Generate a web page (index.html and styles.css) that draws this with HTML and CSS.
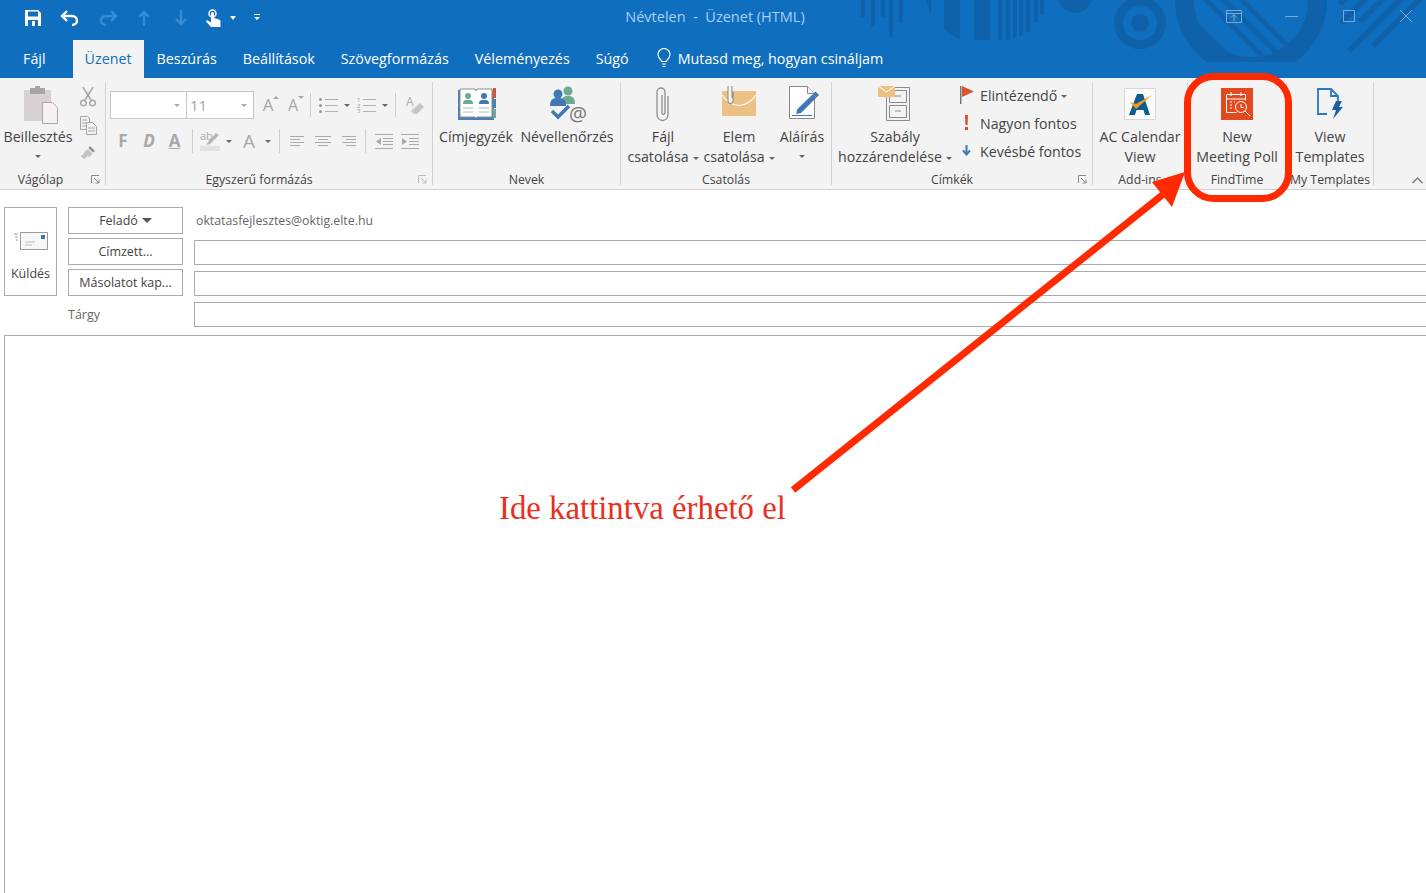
FILE: index.html
```html
<!DOCTYPE html>
<html lang="hu">
<head>
    <meta charset="UTF-8">
    <title>Névtelen - Üzenet (HTML)</title>
    <link rel="stylesheet" href="styles.css">
</head>
<body>
<div class="app">
    <div class="top">
        <!-- background art of the title bar -->
        <svg class="art" width="1426" height="78" viewBox="0 0 1426 78">
            <defs>
                <clipPath id="artClip"><rect x="0" y="0" width="1426" height="62"/></clipPath>
                <clipPath id="ringClip"><circle cx="1251" cy="0" r="57"/></clipPath>
            </defs>
            <g fill="#0f62a9" clip-path="url(#artClip)">
                <rect x="861" y="0" width="4" height="17"/>
                <rect x="871" y="0" width="4" height="26"/>
                <rect x="881" y="0" width="4" height="17"/>
                <rect x="889" y="0" width="4" height="37"/>
                <rect x="899" y="0" width="4" height="23"/>
                <polygon points="925,0 931,0 931,14"/>
                <polygon points="944,0 960,0 960,40 944,30"/>
                <rect x="974" y="0" width="16" height="40"/>
                <rect x="998" y="0" width="4" height="40"/>
                <rect x="1006" y="0" width="4" height="40"/>
                <rect x="1013" y="0" width="4" height="38"/>
                <rect x="1019" y="0" width="4" height="36"/>
                <rect x="1026" y="0" width="4" height="32"/>
                <rect x="1034" y="0" width="4" height="22"/>
                <rect x="1040" y="0" width="4" height="14"/>
                <circle cx="1075" cy="-4" r="17"/>
                <circle cx="1140" cy="23" r="9"/>
                <circle cx="1140" cy="23" r="21.5" fill="none" stroke="#0f62a9" stroke-width="9"/>
                <circle cx="1251" cy="0" r="66.5" fill="none" stroke="#0f62a9" stroke-width="19"/>
                <g clip-path="url(#ringClip)" stroke="#0f62a9" stroke-width="5">
                    <line x1="1190" y1="18" x2="1232" y2="60"/>
                    <line x1="1200" y1="-6" x2="1266" y2="60"/>
                    <line x1="1218" y1="-6" x2="1284" y2="60"/>
                    <line x1="1236" y1="-6" x2="1290" y2="48"/>
                </g>
                <g stroke="#0f62a9" stroke-width="6">
                    <line x1="1349" y1="51" x2="1426" y2="-26"/>
                    <line x1="1373" y1="46" x2="1440" y2="-21"/>
                    <line x1="1341" y1="23" x2="1375" y2="-11"/>
                    <line x1="1360" y1="22" x2="1395" y2="-13"/>
                    <line x1="1340" y1="4" x2="1350" y2="-6"/>
                </g>
            </g>
        </svg>

        <div class="titlebar">
            <div class="qat">
                <svg class="qat-save" width="16" height="16" viewBox="0 0 16 16"><path d="M0 0h13l3 3v13H0z" fill="#fff"/><rect x="3" y="1.500" width="10" height="5" fill="#106ebe"/><rect x="3" y="10" width="10" height="6" fill="#106ebe"/><rect x="7" y="11" width="3" height="5" fill="#fff"/></svg>
                <svg class="qat-undo" width="20" height="18" viewBox="0 0 20 18"><path d="M7 2 2 7l5 5M3 7h9c3 0 5 2 5 4.500S15 16 12 16" fill="none" stroke="#fff" stroke-width="2.400"/></svg>
                <svg class="qat-redo" width="20" height="18" viewBox="0 0 20 18"><path d="M13 2l5 5-5 5M17 7H8C5 7 3 9 3 11.500S5 16 8 16" fill="none" stroke="#3a8bd2" stroke-width="2.400"/></svg>
                <svg class="qat-up" width="14" height="16" viewBox="0 0 14 16"><path d="M2 7l5-5 5 5M7 2v14" fill="none" stroke="#3a8bd2" stroke-width="2.400"/></svg>
                <svg class="qat-down" width="14" height="16" viewBox="0 0 14 16"><path d="M2 9l5 5 5-5M7 14V0" fill="none" stroke="#3a8bd2" stroke-width="2.400"/></svg>
                <svg class="qat-touch" width="15" height="18" viewBox="0 0 15 18"><circle cx="6.500" cy="4.500" r="3.500" fill="none" stroke="#fff" stroke-width="1.500"/><path d="M5 4.500c0-2 3-2 3 0V9l5 1.500c1 .5 1.500 1 1.500 2V18H5L0 12.500l1-1.500 4 2.500z" fill="#fff"/></svg>
                <span class="qat-caret"></span>
                <span class="qat-more"></span>
            </div>
            <div class="doc-title">Névtelen&nbsp; - &nbsp;Üzenet (HTML)</div>
            <div class="win-buttons">
                <svg width="16" height="13" viewBox="0 0 16 13"><path d="M.5.5h15v12H.5zM.5 3.500h15M8 11V5M5 7.500 8 4.500l3 3" fill="none" stroke="#7ea8cf"/></svg>
                <svg width="13" height="13" viewBox="0 0 13 13"><path d="M0 6.500h13" stroke="#7ea8cf"/></svg>
                <svg width="12" height="12" viewBox="0 0 12 12"><path d="M.5.5h11v11H.5z" fill="none" stroke="#7ea8cf"/></svg>
                <svg width="12" height="12" viewBox="0 0 12 12"><path d="M0 0l12 12M12 0 0 12" stroke="#7ea8cf"/></svg>
            </div>
        </div>

        <div class="tabs">
            <span class="tab tab-file">Fájl</span>
            <span class="tab active">Üzenet</span>
            <span class="tab">Beszúrás</span>
            <span class="tab">Beállítások</span>
            <span class="tab">Szövegformázás</span>
            <span class="tab">Véleményezés</span>
            <span class="tab">Súgó</span>
            <span class="tell-me">
                <svg width="14" height="20" viewBox="0 0 14 20"><path d="M4.500 13.500C4 11 1 10 1 6.500a6 6 0 0 1 12 0c0 3.500-3 4.500-3.500 7zM5 16h4M5.500 18.500h3" fill="none" stroke="#fff" stroke-width="1.200"/></svg>
                Mutasd meg, hogyan csináljam
            </span>
        </div>
    </div>

    <div class="ribbon">
        <!-- Vágólap -->
        <div class="group g-clip">
            <div class="group-body">
                <div class="big b-paste">
                    <svg class="icon" width="40" height="40" viewBox="0 0 40 40"><rect x="6" y="4" width="27" height="31" rx="1" fill="#d6d2d4"/><rect x="12" y="2" width="15" height="6" fill="#a8a3a5"/><rect x="17" y="0" width="5" height="4" fill="#a8a3a5"/><path d="M24.500 16.500h10l5 5v16h-15z" fill="#f5f1f5" stroke="#aaa5a9"/></svg>
                    <span>Beillesztés</span>
                    <span class="caret"></span>
                </div>
                <div class="small-icons">
                    <svg width="16" height="20" viewBox="0 0 16 20"><path d="M3 0l8 13M13 0 5 13" stroke="#a6a6a6" stroke-width="1.500" fill="none"/><circle cx="3.500" cy="16" r="2.800" fill="none" stroke="#a6a6a6" stroke-width="1.500"/><circle cx="12.500" cy="16" r="2.800" fill="none" stroke="#a6a6a6" stroke-width="1.500"/></svg>
                    <svg width="17" height="19" viewBox="0 0 17 19"><path d="M.5.500h7l2 2v11H.5zM2 4h5M2 7h5M2 10h5" fill="#f3f3f3" stroke="#a6a6a6"/><path d="M6.500 6.500h6l4 4v8h-10zM8 12h7M8 15h7" fill="#f3f3f3" stroke="#a6a6a6"/></svg>
                    <svg width="17" height="17" viewBox="0 0 17 17"><path d="M10 2l5 5-2 1.500L8.500 4z" fill="#8f8f8f"/><path d="M8 5l4.500 4.500-3 3.500-2-1-3 3-1-.5-3-2.500 3-1.500 1-3z" fill="#c4c4c4"/></svg>
                </div>
            </div>
            <div class="group-label has-launcher-wide">Vágólap</div>
            <svg class="launcher" width="9" height="9" viewBox="0 0 9 9"><path d="M.5 8V.5H8M3 3l5 5M8 4.500V8H4.500" fill="none" stroke="#888"/></svg>
        </div>

        <!-- Egyszerű formázás -->
        <div class="group g-format">
            <div class="group-body format-body">
                <div class="tool-row">
                    <span class="select s-font"><span class="caret"></span></span>
                    <span class="select s-size">11<span class="caret"></span></span>
                    <span class="tool t-a-big">A<i class="tiny-up"></i></span>
                    <span class="tool t-a-small">A<i class="tiny-down"></i></span>
                    <span class="tool-sep sep-a"></span>
                    <svg class="t-bullets" width="19" height="15" viewBox="0 0 19 15"><path d="M6 1.500h13M6 7.500h13M6 13.500h13" stroke="#b0b0b0"/><circle cx="1.500" cy="1.500" r="1.500" fill="#999"/><circle cx="1.500" cy="7.500" r="1.500" fill="#999"/><circle cx="1.500" cy="13.500" r="1.500" fill="#999"/></svg>
                    <span class="caret c-list"></span>
                    <svg class="t-numbers" width="19" height="22" viewBox="0 -3 19 22"><path d="M6 2.500h13M6 8.500h13M6 14.500h13" stroke="#b0b0b0"/><text class="tiny-num" x="0" y="5">1</text><text class="tiny-num" x="0" y="10.500">2</text><text class="tiny-num" x="0" y="16">3</text></svg>
                    <span class="caret c-list"></span>
                    <span class="tool-sep sep-b"></span>
                    <svg class="t-eraser" width="18" height="23" viewBox="0 -4 18 23"><path d="M8 18l-3-3L14 7l4 4-7 7z" fill="#c6c6c6"/><text class="svg-a" x="0" y="10">A</text></svg>
                </div>
                <div class="tool-row row-two">
                    <b class="tool t-f">F</b>
                    <b class="tool t-d">D</b>
                    <b class="tool t-u">A</b>
                    <span class="tool-sep sep-c"></span>
                    <svg class="t-high" width="20" height="25" viewBox="0 -3 20 25"><rect x="0" y="16" width="20" height="5" fill="#e2e2e2"/><path d="M6 15l2-3 8-9 3 2-9 9z" fill="#b5b5b5"/><text class="svg-ab" x="0" y="10">ab</text></svg>
                    <span class="caret c-high"></span>
                    <span class="tool t-color">A</span>
                    <span class="caret c-color"></span>
                    <span class="tool-sep sep-d"></span>
                    <svg class="t-align" width="14" height="11" viewBox="0 0 14 11"><path d="M0 .5h14M0 3.500h10M0 6.500h14M0 9.500h10" stroke="#aaa"/></svg>
                    <svg class="t-align-c" width="16" height="11" viewBox="0 0 16 11"><path d="M0 .5h16M3 3.500h10M0 6.500h16M3 9.500h10" stroke="#aaa"/></svg>
                    <svg class="t-align-r" width="14" height="11" viewBox="0 0 14 11"><path d="M0 .5h14M4 3.500h10M0 6.500h14M4 9.500h10" stroke="#aaa"/></svg>
                    <span class="tool-sep sep-e"></span>
                    <svg class="t-out" width="18" height="15" viewBox="0 0 18 15"><path d="M0 .5h18M8 4.500h10M8 7.500h10M8 10.500h10M0 14.500h18" stroke="#aaa"/><path d="M6 4v7L1 7.500z" fill="#aaa"/></svg>
                    <svg class="t-in" width="18" height="15" viewBox="0 0 18 15"><path d="M0 .5h18M8 4.500h10M8 7.500h10M8 10.500h10M0 14.500h18" stroke="#aaa"/><path d="M1 4v7l5-3.500z" fill="#aaa"/></svg>
                </div>
            </div>
            <div class="group-label has-launcher">Egyszerű formázás</div>
            <svg class="launcher" width="9" height="9" viewBox="0 0 9 9"><path d="M.5 8V.5H8M3 3l5 5M8 4.500V8H4.500" fill="none" stroke="#bbb"/></svg>
        </div>

        <!-- Nevek -->
        <div class="group g-names">
            <div class="group-body">
                <div class="big b-book">
                    <svg class="icon" width="40" height="40" viewBox="0 0 40 40"><rect x="2" y="4" width="36" height="30" fill="#4a7fb8"/><rect x="37" y="2" width="3" height="10" fill="#d9552b"/><rect x="37" y="13" width="3" height="9" fill="#4a7fb8"/><rect x="37" y="23" width="3" height="9" fill="#6cab93"/><path d="M4 3h15l1 2 1-2h15v28H21l-1 1-1-1H4z" fill="#fff" stroke="#8d8d8d"/><circle cx="12" cy="10" r="3" fill="#6cab93"/><path d="M7 18c0-4 2-4 5-4s5 0 5 4z" fill="#6cab93"/><circle cx="28" cy="10" r="3" fill="#3f78b5"/><path d="M23 18c0-4 2-4 5-4s5 0 5 4z" fill="#3f78b5"/><path d="M7 22h10M7 26h10M23 22h10M23 26h10" stroke="#b5b5b5"/></svg>
                    <span>Címjegyzék</span>
                </div>
                <div class="big b-check">
                    <svg class="icon" width="40" height="40" viewBox="0 0 40 40"><circle cx="21" cy="5" r="4.500" fill="#6cab93"/><path d="M14 18c0-7 3-8 7-8s7 1 7 8z" fill="#6cab93"/><circle cx="11" cy="8" r="4.500" fill="#3f78b5"/><path d="M3 20c0-7 3-8 8-8s8 1 8 8z" fill="#3f78b5"/><path d="M5 25l6 6 11-11" fill="none" stroke="#3f78b5" stroke-width="3.500"/><text x="22" y="35" class="at-sign">@</text></svg>
                    <span>Névellenőrzés</span>
                </div>
            </div>
            <div class="group-label">Nevek</div>
        </div>

        <!-- Csatolás -->
        <div class="group g-attach">
            <div class="group-body">
                <div class="big b-file">
                    <svg class="icon" width="40" height="40" viewBox="0 0 40 40"><path d="M25 10v19a5.500 5.500 0 0 1-11 0V6a4 4 0 0 1 8 0v21a1.500 1.500 0 0 1-3 0V9" fill="none" stroke="#8f8f8f" stroke-width="1.300"/></svg>
                    <span>Fájl</span>
                    <span>csatolása<i class="caret inline"></i></span>
                </div>
                <div class="big b-item">
                    <svg class="icon" width="40" height="40" viewBox="0 0 40 40"><rect x="3" y="5" width="34" height="25" fill="#ebc283"/><path d="M3 9c10 14 24 14 34 0" fill="none" stroke="#fff" stroke-width="1.200"/><path d="M14 6v9a2.500 2.500 0 0 1-5 0V1a2 2 0 0 1 4 0v11" fill="#f3f3f3" stroke="#8f8f8f" stroke-width="1.100"/></svg>
                    <span>Elem</span>
                    <span>csatolása<i class="caret inline"></i></span>
                </div>
                <div class="big b-sign">
                    <svg class="icon" width="40" height="40" viewBox="0 0 40 40"><path d="M7.500.5h18l7 7v25h-25z" fill="#fff" stroke="#8a8a8a"/><path d="M25.500.5v7h7" fill="#f3f3f3" stroke="#8a8a8a"/><path d="M14 28l1.500-5L31 8l3.500 3.500L19 27z" fill="#3f78b5"/><path d="M31 8l2.500-2.500 3.500 3.500-2.500 2.500z" fill="#3f78b5"/><path d="M10 29.500h20" stroke="#3f78b5"/></svg>
                    <span>Aláírás</span>
                    <span class="caret"></span>
                </div>
            </div>
            <div class="group-label">Csatolás</div>
        </div>

        <!-- Címkék -->
        <div class="group g-tags">
            <div class="group-body">
                <div class="big b-rule">
                    <svg class="icon" width="40" height="40" viewBox="0 0 40 40"><path d="M11.500 1.500h23v33h-23zM14.500 4.500h17v12h-17zM14.500 19.500h17v12h-17zM20 10h6M20 25h6" fill="#f3f3f3" stroke="#8a8a8a"/><rect x="3" y="-2" width="17" height="13" fill="#ebc283"/><path d="M3 0l8.500 6L20 0" fill="none" stroke="#fff"/></svg>
                    <span>Szabály</span>
                    <span>hozzárendelése<i class="caret inline"></i></span>
                </div>
                <ul class="tag-list">
                    <li>
                        <svg width="14" height="18" viewBox="0 0 14 18"><path d="M.75 0v18" stroke="#777" stroke-width="1.500"/><path d="M2 0l12 5.500L2 11z" fill="#d9552b"/></svg>
                        <span>Elintézendő<i class="caret inline"></i></span>
                    </li>
                    <li>
                        <svg width="14" height="18" viewBox="0 0 14 18"><path d="M5 1h3L7.500 11h-2z" fill="#e0492a"/><rect x="5" y="13" width="3" height="3" fill="#e0492a"/></svg>
                        <span>Nagyon fontos</span>
                    </li>
                    <li>
                        <svg width="14" height="18" viewBox="0 0 14 18"><path d="M3 8.500l3.500 4 3.500-4M6.500 12V3" fill="none" stroke="#3f78b5" stroke-width="2"/></svg>
                        <span>Kevésbé fontos</span>
                    </li>
                </ul>
            </div>
            <div class="group-label has-launcher">Címkék</div>
            <svg class="launcher" width="9" height="9" viewBox="0 0 9 9"><path d="M.5 8V.5H8M3 3l5 5M8 4.500V8H4.500" fill="none" stroke="#888"/></svg>
        </div>

        <!-- Add-ins -->
        <div class="group g-addin">
            <div class="group-body">
                <div class="big">
                    <svg class="icon icon-low" width="32" height="32" viewBox="0 0 32 32"><rect x=".5" y=".5" width="31" height="31" fill="#fbfbfb" stroke="#d8d8d8"/><path d="M5 27 13 6h6l7 21h-5l-1.500-5h-7L11 27z" fill="#0f5c8f"/><path d="M6 14l6 7L28 7 12 16z" fill="#f29a1f"/></svg>
                    <span>AC Calendar</span>
                    <span>View</span>
                </div>
            </div>
            <div class="group-label">Add-ins</div>
        </div>

        <div class="group g-findtime">
            <div class="group-body">
                <div class="big">
                    <svg class="icon icon-low" width="32" height="32" viewBox="0 0 32 32"><rect width="32" height="32" fill="#e2491e"/><path d="M5.500 6.500h19v6M5.500 6.500v18h10M5.500 11h19M10 4v4M20 4v4" fill="none" stroke="#fff"/><path d="M9 14h2M9 17h2M9 20h2M13 14h1" stroke="#fff"/><circle cx="20" cy="19" r="5.500" fill="#e2491e" stroke="#fff"/><path d="M20 16v3.500h2.500M24 23l5 5" fill="none" stroke="#fff"/></svg>
                    <span>New</span>
                    <span>Meeting Poll</span>
                </div>
            </div>
            <div class="group-label">FindTime</div>
        </div>

        <div class="group g-templates">
            <div class="group-body">
                <div class="big">
                    <svg class="icon icon-low" width="32" height="32" viewBox="0 0 32 32"><path d="M13 26H4V1h13l7 7v7" fill="none" stroke="#2b79c2" stroke-width="1.800"/><path d="M17 1v7h7" fill="none" stroke="#2b79c2" stroke-width="1.800"/><path d="M22 13h6l-3 6h4l-10 12 3-9h-4z" fill="#1c5f9e"/></svg>
                    <span>View</span>
                    <span>Templates</span>
                </div>
            </div>
            <div class="group-label">My Templates</div>
        </div>

        <svg class="collapse" width="11" height="7" viewBox="0 0 11 7"><path d="M.5 6l5-5 5 5" fill="none" stroke="#777" stroke-width="1.400"/></svg>
    </div>

    <div class="compose">
        <div class="head">
            <button class="send">
                <svg width="34" height="18" viewBox="0 0 34 18"><path d="M6.500 .5h27v17h-27z" fill="#f7f7f7" stroke="#9a9a9a"/><rect x="27" y="3" width="4" height="4" fill="#3f78b5"/><path d="M11 10h10M11 13h7" stroke="#bbb"/><path d="M0 2h4M1 5h3M2 8h2" stroke="#999"/></svg>
                <span>Küldés</span>
            </button>
            <div class="fields">
                <button class="field-btn">Feladó<i class="from-caret"></i></button>
                <div class="from-addr">oktatasfejlesztes@oktig.elte.hu</div>
                <button class="field-btn">Címzett...</button>
                <input class="field-input" type="text">
                <button class="field-btn">Másolatot kap...</button>
                <input class="field-input" type="text">
                <div class="subject-label">Tárgy</div>
                <input class="field-input" type="text">
            </div>
        </div>
        <div class="editor"></div>
    </div>

    <!-- annotation drawn over the screenshot -->
    <svg class="annotation" width="1426" height="893" viewBox="0 0 1426 893">
        <rect x="1187.500" y="76.500" width="101" height="122" rx="26" fill="none" stroke="#ff2a00" stroke-width="7"/>
        <line x1="793" y1="490" x2="1166" y2="192" stroke="#ff2a00" stroke-width="7"/>
        <polygon points="1185,172 1152,182 1172,207" fill="#ff2a00"/>
    </svg>
    <div class="note">Ide kattintva érhető el</div>
</div>
</body>
</html>
```

FILE: styles.css
```css
* {
    margin: 0;
    padding: 0;
    box-sizing: border-box;
}

html, body {
    height: 100%;
    overflow: hidden;
}

body {
    background: #fff;
    font-family: 'Open Sans', 'Noto Sans', sans-serif;
    font-size: 14.2px;
    color: #444;
}

svg {
    display: block;
    flex: none;
}

i {
    font-style: normal;
}

.app {
    position: relative;
    height: 100%;
    display: flex;
    flex-direction: column;
    overflow: hidden;
}

/* title bar and tabs */
.top {
    position: relative;
    height: 78px;
    flex: none;
    background: #106ebe;
}

.art {
    position: absolute;
    left: 0;
    top: 0;
}

.titlebar {
    position: relative;
    height: 40px;
    display: flex;
    align-items: center;
}

.qat {
    display: flex;
    align-items: center;
    padding-left: 25px;
    height: 35px;
    margin-bottom: 5px;
}

.qat-undo { margin-left: 19px; }
.qat-redo { margin-left: 18px; }
.qat-up { margin-left: 19px; }
.qat-down { margin-left: 23px; }
.qat-touch { margin-left: 18px; }

.qat-caret {
    width: 0;
    height: 0;
    margin-left: 9px;
    border-left: 3.5px solid transparent;
    border-right: 3.5px solid transparent;
    border-top: 4px solid #fff;
}

.qat-more {
    width: 6px;
    height: 7px;
    margin-left: 18px;
    border-top: 1px solid #fff;
    position: relative;
}

.qat-more::after {
    content: "";
    position: absolute;
    left: 0;
    top: 2px;
    border-left: 3px solid transparent;
    border-right: 3px solid transparent;
    border-top: 3px solid #fff;
}

.doc-title {
    position: absolute;
    left: 0;
    right: 0;
    top: 7px;
    text-align: center;
    color: #a9d0f2;
    font-size: 14.5px;
    line-height: 20px;
    padding-left: 4px;
}

.win-buttons {
    margin-left: auto;
    display: flex;
    align-items: center;
    padding-right: 14px;
    padding-bottom: 8px;
}

.win-buttons svg { margin-left: 45px; }
.win-buttons svg:nth-child(2) { margin-left: 43px; }

.tabs {
    position: relative;
    height: 38px;
    display: flex;
    color: #fff;
    font-size: 14.3px;
    line-height: 37px;
}

.tab {
    padding: 0 13px;
    white-space: nowrap;
}

.tab-file {
    margin-left: 10px;
    padding-right: 27px;
}

.tab.active {
    background: #f3f3f3;
    color: #106ebe;
    padding: 0 12px;
}

.tell-me {
    display: flex;
    align-items: center;
    gap: 7px;
    margin-left: 15px;
    padding-bottom: 2px;
    white-space: nowrap;
}

/* ribbon */
.ribbon {
    position: relative;
    flex: none;
    height: 112px;
    background: #f3f3f3;
    border-bottom: 1px solid #d0d0d0;
    display: flex;
    padding-top: 4px;
}

.group {
    position: relative;
    height: 103px;
    border-right: 1px solid #d2d2d2;
    flex: none;
}

.group-body {
    height: 87px;
    display: flex;
}

.group-label {
    text-align: center;
    font-size: 12.3px;
    line-height: 22px;
    color: #444;
    white-space: nowrap;
}

.group-label.has-launcher { padding-right: 20px; }
.group-label.has-launcher-wide { padding-right: 24px; }

.launcher {
    position: absolute;
    right: 5px;
    bottom: 1px;
}

.g-clip { width: 106px; }
.g-format { width: 327px; }
.g-names { width: 188px; }
.g-attach { width: 211px; }
.g-tags { width: 261px; }
.g-addin { width: 95px; }
.g-findtime { width: 99px; }
.g-templates { width: 87px; }

.big {
    flex: none;
    width: 100%;
    display: flex;
    flex-direction: column;
    align-items: center;
    line-height: 20px;
    white-space: nowrap;
}

.big .icon {
    margin-top: 4px;
    margin-bottom: 1px;
}

.big .icon-low {
    margin-top: 6px;
    margin-bottom: 7px;
}

.b-paste { width: 76px; }
.b-book { width: 86px; }
.b-check { width: 96px; }
.b-file { width: 84px; }
.b-item { width: 68px; }
.b-sign { width: 58px; }
.b-rule { width: 126px; }

.caret {
    display: block;
    width: 0;
    height: 0;
    border-left: 3px solid transparent;
    border-right: 3px solid transparent;
    border-top: 3px solid #666;
}

.big > .caret {
    margin-top: 8px;
}

.caret.inline {
    display: inline-block;
    margin-left: 4px;
    vertical-align: middle;
}

.small-icons {
    width: 24px;
    padding-top: 5px;
    display: flex;
    flex-direction: column;
    align-items: center;
    gap: 9px;
}

/* font tools */
.format-body {
    flex-direction: column;
    padding-left: 4px;
}

.tool-row {
    display: flex;
    align-items: center;
    height: 28px;
    margin-top: 9px;
}

.row-two {
    margin-top: 7px;
    height: 30px;
}

.select {
    height: 28px;
    background: #fff;
    border: 1px solid #c6c6c6;
    display: flex;
    align-items: center;
    justify-content: flex-end;
    padding-right: 6px;
    color: #a5a5a5;
    font-size: 15px;
    position: relative;
}

.select .caret { border-top-color: #aaa; }

.s-font { width: 77px; }

.s-size {
    width: 68px;
    margin-left: -1px;
    justify-content: space-between;
    padding-left: 3px;
}

.tool {
    color: #a8a8a8;
    text-align: center;
    line-height: 20px;
    position: relative;
    flex: none;
}

.t-a-big { width: 24px; margin-left: 2px; font-size: 17px; }
.t-a-small { width: 24px; margin-left: 1px; font-size: 16px; }

.tiny-up, .tiny-down {
    position: absolute;
    top: 1px;
    right: 1px;
    border-left: 3px solid transparent;
    border-right: 3px solid transparent;
}

.tiny-up { border-bottom: 3px solid #a8a8a8; }
.tiny-down { border-top: 3px solid #a8a8a8; }

.tool-sep {
    width: 1px;
    height: 24px;
    background: #cfcfcf;
    flex: none;
}

.sep-a { margin-left: 5px; }
.t-bullets { margin-left: 8px; }
.c-list { margin-left: 6px; }
.t-numbers { margin-left: 7px; }
.sep-b { margin-left: 7px; }
.t-eraser { margin-left: 10px; margin-top: -4px; }

.tiny-num {
    font-family: 'Open Sans', sans-serif;
    font-size: 6px;
    fill: #999;
}

.svg-a, .svg-ab {
    font-family: 'Open Sans', sans-serif;
    fill: #aaa;
}

.svg-a { font-size: 12px; }
.svg-ab { font-size: 11px; }

.t-f { width: 26px; font-size: 17px; }
.t-d { width: 26px; font-size: 17px; font-style: italic; }
.t-u { width: 25px; font-size: 17px; text-decoration: underline; }
.sep-c { margin-left: 5px; }
.t-high { margin-left: 7px; margin-top: -3px; }
.c-high { margin-left: 6px; }
.t-color { width: 22px; margin-left: 6px; font-size: 19px; }
.c-color { margin-left: 5px; }
.sep-d { margin-left: 8px; }
.t-align { margin-left: 10px; }
.t-align-c { margin-left: 11px; }
.t-align-r { margin-left: 11px; }
.sep-e { margin-left: 9px; }
.t-out { margin-left: 9px; }
.t-in { margin-left: 8px; }

.at-sign {
    font-family: 'Open Sans', sans-serif;
    font-size: 20px;
    fill: #777;
}

.tag-list {
    list-style: none;
    margin-top: -1px;
}

.tag-list li {
    display: flex;
    align-items: center;
    height: 28px;
    gap: 6px;
    padding-left: 2px;
    white-space: nowrap;
}

.collapse {
    position: absolute;
    right: 3px;
    bottom: 5px;
}

/* message form */
.compose {
    flex: 1;
    display: flex;
    flex-direction: column;
    min-height: 0;
    padding-left: 4px;
}

.head {
    display: flex;
    padding-top: 17px;
}

.send {
    width: 53px;
    height: 89px;
    background: #fff;
    border: 1px solid #ababab;
    font: inherit;
    font-size: 12.5px;
    color: #444;
    display: flex;
    flex-direction: column;
    align-items: center;
    padding-top: 24px;
    gap: 15px;
    flex: none;
}

.fields {
    flex: 1;
    margin-left: 11px;
    display: grid;
    grid-template-columns: 115px 1fr;
    grid-auto-rows: 27px;
    row-gap: 4px;
    column-gap: 11px;
}

.field-btn {
    background: #fff;
    border: 1px solid #ababab;
    font: inherit;
    font-size: 12.5px;
    line-height: 25px;
    color: #444;
}

.from-caret {
    display: inline-block;
    margin-left: 4px;
    vertical-align: 2px;
    border-left: 5px solid transparent;
    border-right: 5px solid transparent;
    border-top: 5px solid #555;
}

.from-addr {
    padding-left: 2px;
    font-size: 12.3px;
    line-height: 27px;
    color: #666;
}

.field-input {
    align-self: end;
    height: 25px;
    width: 100%;
    border: 1px solid #ababab;
    border-right: none;
    background: #fff;
}

.subject-label {
    font-size: 12.5px;
    line-height: 29px;
    color: #666;
}

.editor {
    flex: 1;
    margin-top: 8px;
    border-top: 1px solid #ababab;
    border-left: 1px solid #ababab;
}

/* red annotation */
.annotation {
    position: absolute;
    left: 0;
    top: 0;
    pointer-events: none;
}

.note {
    position: absolute;
    left: 499px;
    top: 489px;
    font-family: 'Liberation Serif', serif;
    font-size: 32.8px;
    line-height: 38px;
    color: #e8301c;
    white-space: nowrap;
}
```
